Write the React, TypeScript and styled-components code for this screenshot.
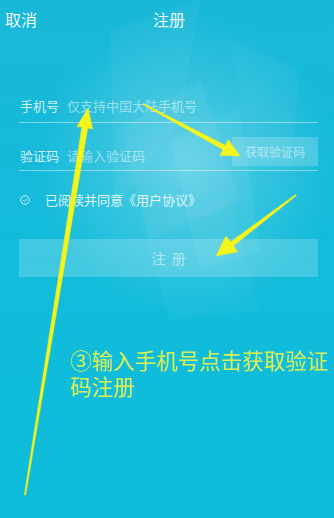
import React from "react";
import styled, { createGlobalStyle } from "styled-components";

const Global = createGlobalStyle`
  html, body { margin: 0; padding: 0; background: #0fbcdb; }
  * { box-sizing: border-box; }
`;

const FONT = `"Noto Sans CJK SC", "Noto Sans", sans-serif`;

const Screen = styled.div`
  position: relative;
  width: 334px;
  height: 518px;
  overflow: hidden;
  background: linear-gradient(180deg, #19b8d8 0%, #12bcdb 55%, #0cbcda 100%);
  font-family: ${FONT};
`;

const Backdrop = styled.svg`
  position: absolute;
  left: 0;
  top: 0;
  width: 334px;
  height: 518px;
  pointer-events: none;
`;

const Overlay = styled.svg`
  position: absolute;
  left: 0;
  top: 0;
  width: 334px;
  height: 518px;
  pointer-events: none;
  z-index: 5;
`;

const Content = styled.div`
  position: relative;
  z-index: 1;
  display: flex;
  flex-direction: column;
`;

const Header = styled.header`
  height: 38px;
  padding: 0 5px;
  display: grid;
  grid-template-columns: 1fr auto 1fr;
  align-items: center;
  color: rgba(255, 255, 255, 0.95);
  font-size: 16px;
`;

const Title = styled.div`
  padding-left: 4px;
`;

const Form = styled.div`
  padding: 50px 16px 0 19px;
  display: flex;
  flex-direction: column;
`;

const Row = styled.div<{ $h: number; $pb: number }>`
  height: ${(p) => p.$h}px;
  padding: 0 0 ${(p) => p.$pb}px 1px;
  border-bottom: 1px solid rgba(255, 255, 255, 0.45);
  display: flex;
  align-items: flex-end;
  font-size: 13px;
  line-height: 16px;
`;

const Label = styled.span`
  color: rgba(255, 255, 255, 0.8);
  width: 47px;
  flex: none;
`;

const Placeholder = styled.span`
  color: rgba(255, 255, 255, 0.5);
  flex: 1;
`;

const CodeButton = styled.div`
  width: 86px;
  height: 29px;
  margin-bottom: -2px;
  background: rgba(255, 255, 255, 0.2);
  color: rgba(255, 255, 255, 0.55);
  font-size: 12px;
  display: flex;
  align-items: center;
  justify-content: center;
`;

const Agree = styled.div`
  margin-top: 21px;
  display: flex;
  align-items: center;
  font-size: 13px;
  line-height: 16px;
  color: rgba(255, 255, 255, 0.85);
  padding-left: 1px;
`;

const CheckIcon = styled.svg`
  width: 10px;
  height: 10px;
  margin-right: 15px;
`;

const Submit = styled.div`
  margin-top: 31px;
  height: 38px;
  background: rgba(255, 255, 255, 0.2);
  color: rgba(255, 255, 255, 0.55);
  font-size: 14px;
  letter-spacing: 6px;
  display: flex;
  align-items: center;
  justify-content: center;
  padding-left: 6px;
`;

const Note = styled.div`
  margin: 72px 0 0 70px;
  display: flex;
  flex-direction: column;
`;

const NoteLine = styled.div`
  font-family: "Liberation Sans", "Noto Sans CJK SC", sans-serif;
  font-size: 21.5px;
  line-height: 26px;
  height: 26px;
  color: #d9ee52;
  white-space: nowrap;
`;

function Arrow({ x1, y1, x2, y2, w0 = 1.5, w1 = 5, head = 16, hw = 9 }: { x1: number; y1: number; x2: number; y2: number; w0?: number; w1?: number; head?: number; hw?: number }) {
  const dx = x2 - x1;
  const dy = y2 - y1;
  const len = Math.hypot(dx, dy);
  const ux = dx / len;
  const uy = dy / len;
  const bx = x2 - ux * head;
  const by = y2 - uy * head;
  const px = -uy;
  const py = ux;
  const pts = [
    [x1 + (px * w0) / 2, y1 + (py * w0) / 2],
    [bx + (px * w1) / 2, by + (py * w1) / 2],
    [bx + px * hw, by + py * hw],
    [x2, y2],
    [bx - px * hw, by - py * hw],
    [bx - (px * w1) / 2, by - (py * w1) / 2],
    [x1 - (px * w0) / 2, y1 - (py * w0) / 2],
  ]
    .map((p) => `${p[0].toFixed(1)},${p[1].toFixed(1)}`)
    .join(" ");
  return <polygon points={pts} fill="#f4f51c" stroke="#e9ec22" strokeWidth="0.5" strokeLinejoin="round" />;
}

export default function App() {
  return (
    <>
      <Global />
      <Screen>
        <Backdrop viewBox="0 0 334 518">
          <defs>
            <radialGradient id="glow" cx="185" cy="165" r="150" gradientUnits="userSpaceOnUse">
              <stop offset="0" stopColor="#ffffff" stopOpacity="0.32" />
              <stop offset="0.5" stopColor="#ffffff" stopOpacity="0.14" />
              <stop offset="1" stopColor="#ffffff" stopOpacity="0" />
            </radialGradient>
          </defs>
          <rect x="0" y="0" width="334" height="518" fill="url(#glow)" />
          <polygon points="110,30 200,0 180,120 115,210" fill="rgba(255,255,255,0.04)" />
          <polygon points="120,130 200,80 240,200 150,240" fill="rgba(255,255,255,0.05)" />
          <polygon points="170,140 240,110 260,250 200,270" fill="rgba(255,255,255,0.05)" />
          <polygon points="140,220 230,200 260,310 170,320" fill="rgba(255,255,255,0.03)" />
          <polygon points="230,40 300,70 290,170 250,150" fill="rgba(255,255,255,0.03)" />
        </Backdrop>
        <Content>
          <Header>
            <span>取消</span>
            <Title>注册</Title>
            <span />
          </Header>
          <Form>
            <Row $h={35} $pb={8}>
              <Label>手机号</Label>
              <Placeholder>仅支持中国大陆手机号</Placeholder>
            </Row>
            <Row $h={48} $pb={6}>
              <Label>验证码</Label>
              <Placeholder>请输入验证码</Placeholder>
              <CodeButton>获取验证码</CodeButton>
            </Row>
            <Agree>
              <CheckIcon viewBox="0 0 10 10">
                <circle cx="5" cy="5" r="4.3" fill="none" stroke="rgba(255,255,255,0.85)" strokeWidth="0.9" />
                <path d="M3 5.1 L4.5 6.5 L7 3.8" fill="none" stroke="rgba(255,255,255,0.85)" strokeWidth="0.9" />
              </CheckIcon>
              已阅读并同意《用户协议》
            </Agree>
            <Submit>注册</Submit>
          </Form>
          <Note>
            <NoteLine>③输入手机号点击获取验证</NoteLine>
            <NoteLine>码注册</NoteLine>
          </Note>
        </Content>
        <Overlay viewBox="0 0 334 518">
          <Arrow x1={25} y1={495} x2={88} y2={108} w0={1.5} w1={6} head={20} hw={8} />
          <Arrow x1={143} y1={104} x2={240} y2={156} w0={1.2} w1={5} head={18} hw={9} />
          <Arrow x1={296} y1={195} x2={216} y2={256} w0={1.2} w1={5} head={20} hw={10} />
        </Overlay>
      </Screen>
    </>
  );
}
